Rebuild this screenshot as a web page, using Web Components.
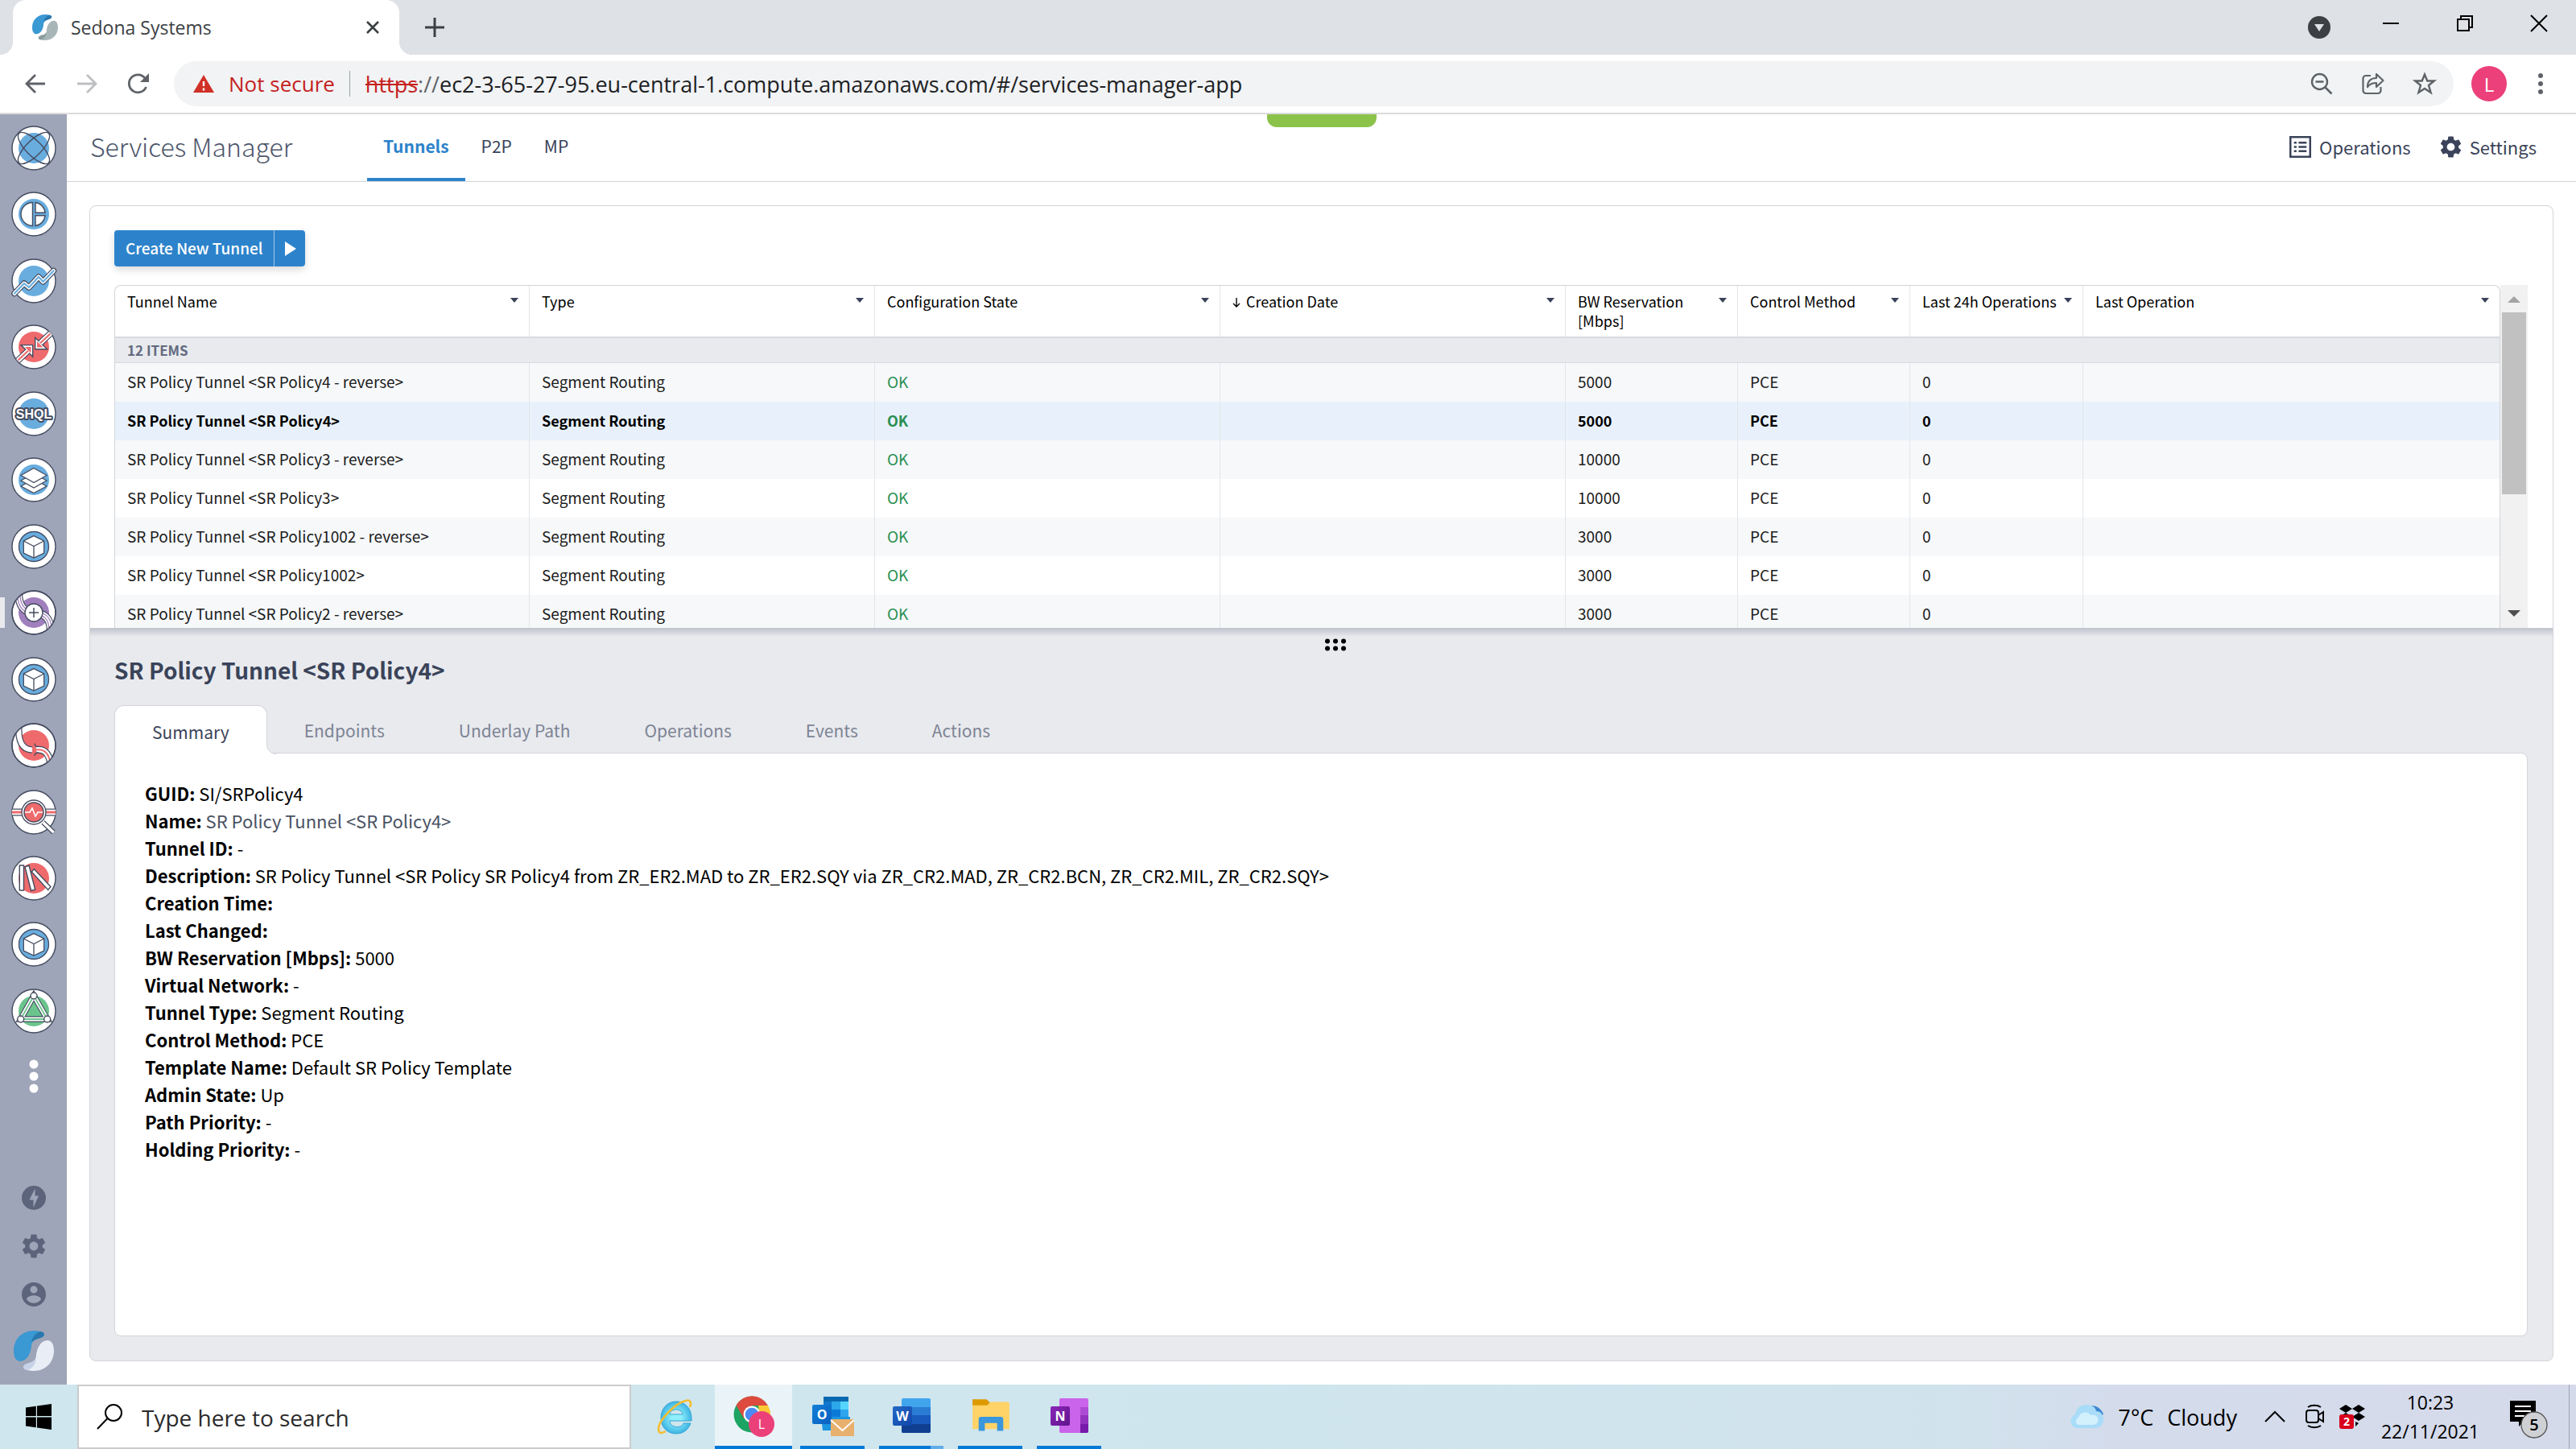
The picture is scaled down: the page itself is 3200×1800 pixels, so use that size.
<!DOCTYPE html>
<html lang="en">
<head>
<meta charset="utf-8">
<title>Sedona Systems</title>
<style>
  body {
    --app-font: "Noto Sans CJK SC", "Noto Sans", sans-serif;
    --os-font: "Open Sans", "Noto Sans", sans-serif;
    --ink: #3a4359;
    --blue: #2d83cb;
    --line: #d3d5da;
    --pane: #e8eaee;
    margin: 0;
    height: 100vh;
    display: flex;
    flex-direction: column;
    overflow: hidden;
    background: #fff;
    color: #000;
    font-family: var(--app-font);
  }
  .workspace { flex: 1; display: flex; min-height: 0; }
  main { flex: 1; display: flex; flex-direction: column; min-width: 0; }
</style>
</head>
<body>
  <browser-chrome tab-title="Sedona Systems"></browser-chrome>

  <div class="workspace">
    <side-nav></side-nav>
    <main>
      <app-header heading="Services Manager">
        <header-tab active>Tunnels</header-tab>
        <header-tab>P2P</header-tab>
        <header-tab>MP</header-tab>
        <header-action slot="actions" icon="list">Operations</header-action>
        <header-action slot="actions" icon="gear">Settings</header-action>
      </app-header>
      <split-view>
        <tunnel-grid slot="top"></tunnel-grid>
        <detail-panel slot="bottom" heading="SR Policy Tunnel &lt;SR Policy4&gt;">
          <detail-row label="GUID">SI/SRPolicy4</detail-row>
          <detail-row label="Name" muted>SR Policy Tunnel &lt;SR Policy4&gt;</detail-row>
          <detail-row label="Tunnel ID">-</detail-row>
          <detail-row label="Description">SR Policy Tunnel &lt;SR Policy SR Policy4 from ZR_ER2.MAD to ZR_ER2.SQY via ZR_CR2.MAD, ZR_CR2.BCN, ZR_CR2.MIL, ZR_CR2.SQY&gt;</detail-row>
          <detail-row label="Creation Time"></detail-row>
          <detail-row label="Last Changed"></detail-row>
          <detail-row label="BW Reservation [Mbps]">5000</detail-row>
          <detail-row label="Virtual Network">-</detail-row>
          <detail-row label="Tunnel Type">Segment Routing</detail-row>
          <detail-row label="Control Method">PCE</detail-row>
          <detail-row label="Template Name">Default SR Policy Template</detail-row>
          <detail-row label="Admin State">Up</detail-row>
          <detail-row label="Path Priority">-</detail-row>
          <detail-row label="Holding Priority">-</detail-row>
        </detail-panel>
      </split-view>
    </main>
  </div>

  <task-bar></task-bar>

<script>
/**
 * ============================================================
 * Icon set
 * ------------------------------------------------------------
 * name -> [viewBox, markup]. Plain icons use currentColor.
 * ============================================================
 */
const GEAR = `<path fill="currentColor" d="M19.14 12.94c.04-.3.06-.61.06-.94 0-.32-.02-.64-.07-.94l2.03-1.58c.18-.14.23-.41.12-.61l-1.92-3.32c-.12-.22-.37-.29-.59-.22l-2.39.96c-.5-.38-1.03-.7-1.62-.94l-.36-2.54c-.04-.24-.24-.41-.48-.41h-3.84c-.24 0-.43.17-.47.41l-.36 2.54c-.59.24-1.13.57-1.62.94l-2.39-.96c-.22-.08-.47 0-.59.22L2.74 8.87c-.12.21-.08.47.12.61l2.03 1.58c-.05.3-.09.63-.09.94s.02.64.07.94l-2.03 1.58c-.18.14-.23.41-.12.61l1.92 3.32c.12.22.37.29.59.22l2.39-.96c.5.38 1.03.7 1.62.94l.36 2.54c.05.24.24.41.48.41h3.84c.24 0 .44-.17.47-.41l.36-2.54c.59-.24 1.13-.56 1.62-.94l2.39.96c.22.08.47 0 .59-.22l1.92-3.32c.12-.22.07-.47-.12-.61l-2.01-1.58zM12 15.6c-1.98 0-3.6-1.62-3.6-3.6s1.62-3.6 3.6-3.6 3.6 1.62 3.6 3.6-1.62 3.6-3.6 3.6z"/>`;

const DARK = "#454c60";

// White disc with a coloured core, shared by every app badge
const disc = (core, body) => `
  <circle cx="28" cy="28" r="27" fill="#fff" stroke="${DARK}" stroke-width="1.4"/>
  <circle cx="28" cy="28" r="19" fill="${core}"/>${body}`;

// Same path stroked several times, widest first
const tube = (d, widths, colors) => widths
  .map((w, i) => `<path d="${d}" fill="none" stroke="${colors[i]}" stroke-width="${w}"/>`)
  .join("");

const logo = (pale, paleDark) => {
  const lobe = "M25 0C10 0 0 11 0 25c0 8 3 13 8 13 8 0 13-9 14-18 0-6 3-8 8-10 5-1 8-3 8-6-2-3-8-4-13-4z";
  const fold = "M33 1c-6 2-10 7-11 14 2-3 5-4 8-5 5-1 8-3 8-6-1-2-3-3-5-3z";
  return `
    <path fill="#3a98d3" d="${lobe}"/><path fill="#2a78ae" d="${fold}"/>
    <g transform="rotate(180 25 25)"><path fill="${pale}" d="${lobe}"/><path fill="${paleDark}" d="${fold}"/></g>`;
};

const CUBE = disc("#69addf", `
  <circle cx="28" cy="28" r="18.5" fill="none" stroke="${DARK}" stroke-width="1.3"/>
  <path d="M28 14.6L40.7 21v15L28 42 15.3 36V21z" fill="#fff" stroke="${DARK}" stroke-width="1.3"/>
  <path d="M15.3 21L28 27.5 40.7 21M28 27.5V42" fill="none" stroke="${DARK}" stroke-width="1.3"/>`);

const officeTile = (letter, from, to) => `
  <defs><linearGradient id="t" x1="0" y1="0" x2="1" y2="1"><stop offset="0" stop-color="${from}"/><stop offset="1" stop-color="${to}"/></linearGradient></defs>
  <rect x="0" y="11" width="24" height="24" rx="2" fill="url(#t)"/>
  <text x="12" y="29" text-anchor="middle" font-family="Open Sans, sans-serif" font-weight="700" font-size="16" fill="#fff">${letter}</text>`;

const ICONS = {
  network: ["0 0 56 56", disc("#69addf", `
    <g fill="none" stroke="${DARK}" stroke-width="1.4">
      <ellipse cx="28" cy="28" rx="26" ry="9.5" transform="rotate(45 28 28)"/>
      <ellipse cx="28" cy="28" rx="26" ry="9.5" transform="rotate(-45 28 28)"/>
    </g>`)],
  pie: ["0 0 56 56", disc("#69addf", `
    <g fill="#fff" stroke="${DARK}" stroke-width="1.4">
      <path d="M26.5 13.5V42.5A14.5 14.5 0 0 1 26.5 13.5z"/>
      <path d="M30 13.5V26.3H42A14 14 0 0 0 30 13.5z"/>
      <path d="M30 42.5V29.8H42A14 14 0 0 1 30 42.5z"/>
    </g>`)],
  trend: ["0 0 56 56", disc("#69addf", `<g stroke-linecap="round" stroke-linejoin="round">${
    tube("M4 43.5L16 31l6 5 12-13 5.5 6L52.5 15.5", [7.5, 5, 2.2], [DARK, "#fff", "#69addf"])}</g>`)],
  arrows: ["0 0 56 56", disc("#ef6a6c", `
    ${tube("M8 45L23 31M49 11L34 25", [8, 5.6], [DARK, "#fff"])}
    <path d="M12 25.6H26.7V40L22 35.5 16.5 30zM29.7 16.5V30.8H44.7L39.5 26 34 20.5z" fill="#fff" stroke="${DARK}" stroke-width="1.4"/>
    ${tube("M8.5 44.5L21 32.8M48.5 11.5L36 23.2", [5.6, 2.2], ["#fff", "#ef6a6c"])}
    <path d="M17 28h7.500v7.500zM32 21v7.500h7.500z" fill="#ef6a6c"/>`)],
  shql: ["0 0 56 56", disc("#69addf", `
    <text x="28" y="34" text-anchor="middle" font-family="Liberation Sans, sans-serif" font-weight="700" font-size="16"
      fill="#fff" stroke="${DARK}" stroke-width="4" stroke-linejoin="round" paint-order="stroke">SHQL</text>`)],
  layers: ["0 0 56 56", disc("#69addf", `
    <g fill="#fff" stroke="${DARK}" stroke-width="1.3">
      <path d="M28 27l16 9-16 8.5L12 36z"/><path d="M28 20l16 9-16 9-16-9z"/><path d="M28 13.5l16 9-16 9-16-9z"/>
    </g>`)],
  cube: ["0 0 56 56", CUBE],
  tunnel: ["0 0 56 56", `<clipPath id="c"><circle cx="28" cy="28" r="27"/></clipPath>` + disc("#a07fbd", `
    <g clip-path="url(#c)">${tube("M9 2C9 14 12 24 22 27M34 29C44 31 49 37 49 54", [10, 7.6, 4.6, 2], [DARK, "#fff", "#a07fbd", "#fff"])}</g>
    <circle cx="28" cy="28" r="27" fill="none" stroke="${DARK}" stroke-width="1.4"/>
    <circle cx="28" cy="28" r="11" fill="#fff" stroke="${DARK}" stroke-width="1.4"/>
    <path d="M28 22v12M22 28h12" stroke="${DARK}" stroke-width="1.5"/>`)],
  broken: ["0 0 56 56", `<clipPath id="c"><circle cx="28" cy="28" r="27"/></clipPath>` + disc("#ef6a6c", `
    <g clip-path="url(#c)">
      ${tube("M9.500 2C8 24 14 33 26 33.5", [8.5, 6], [DARK, "#fff"])}
      ${tube("M31 33.5C42 32 48 39 49 54", [9, 6.6, 2], [DARK, "#fff", "#ef6a6c"])}
      <path d="M29 25.5c0 3 2 4 5 4M29 41c0-3 2-4 5-4" fill="none" stroke="${DARK}" stroke-width="1.3"/>
    </g>
    <circle cx="28" cy="28" r="27" fill="none" stroke="${DARK}" stroke-width="1.4"/>`)],
  inspect: ["0 0 56 56", `
    <circle cx="28" cy="28" r="27" fill="#fff" stroke="${DARK}" stroke-width="1.4"/>
    ${tube("M1 28H55", [9, 6.5, 3], [DARK, "#fff", "#ef6a6c"])}
    ${tube("M39.5 40.5L52.5 53", [6, 3.5], [DARK, "#fff"])}
    <circle cx="28" cy="28" r="15" fill="#fff" stroke="${DARK}" stroke-width="1.4"/>
    <circle cx="28" cy="28" r="12" fill="#ef6a6c" stroke="${DARK}" stroke-width="1.4"/>
    <path d="M17 28h6l3-5 4 10 3-5h6" fill="none" stroke="#fff" stroke-width="1.6"/>`],
  books: ["0 0 56 56", disc("#ef6a6c", `
    <g fill="#fff" stroke="${DARK}" stroke-width="1.4">
      <path d="M10.3 12h5.2v31h-5.2zM17 14l5-2 7.7 30-5 1.5zM25.3 20l3-3.5L49 38.5l-3.3 4z"/>
    </g>`)],
  triangle: ["0 0 56 56", disc("#6cc48d", `
    ${tube("M28 9L11.7 38H44.7z", [7.5, 5.2, 1.8], [DARK, "#fff", "#6cc48d"])}
    <g fill="#fff" stroke="${DARK}" stroke-width="1.4"><circle cx="28" cy="9" r="4"/><circle cx="11.7" cy="38" r="4"/><circle cx="44.7" cy="38" r="4"/></g>`)],
  more: ["0 0 12 42", `<g fill="#fff"><circle cx="6" cy="6" r="5.5"/><circle cx="6" cy="21" r="5.5"/><circle cx="6" cy="36" r="5.5"/></g>`],
  bolt: ["0 0 30 30", `<circle cx="15" cy="15" r="15" fill="currentColor"/><path d="M16.5 3.5v9H21L14.5 27v-9.500H9.500z" fill="#9ea5b8"/>`],
  gear: ["2 2 20 20", GEAR],
  user: ["2 2 20 20", `<path fill="currentColor" d="M12 2C6.48 2 2 6.48 2 12s4.48 10 10 10 10-4.48 10-10S17.52 2 12 2zm0 3c1.66 0 3 1.34 3 3s-1.34 3-3 3-3-1.34-3-3 1.34-3 3-3zm0 14.2c-2.5 0-4.71-1.28-6-3.22.03-1.99 4-3.08 6-3.08 1.99 0 5.97 1.09 6 3.08-1.29 1.94-3.5 3.22-6 3.22z"/>`],
  logo: ["0 0 50 50", logo("#e9edf6", "#c6d2e8")],
  favicon: ["0 0 50 50", logo("#a9b6b8", "#8b9b9e")],
  list: ["0 0 26 26", `<rect x="1.2" y="1.2" width="23.6" height="23.6" fill="none" stroke="currentColor" stroke-width="2.4"/>
    <path d="M5.5 8h3M11 8h9.500M5.500 13h3M11 13h9.500M5.500 18h3M11 18h9.500" stroke="currentColor" stroke-width="2.4"/>`],
  // browser
  back: ["0 0 28 28", `<path d="M26 14H3M14 3L3 14l11 11" fill="none" stroke="currentColor" stroke-width="2.8"/>`],
  forward: ["0 0 28 28", `<path d="M2 14h23M14 3l11 11-11 11" fill="none" stroke="currentColor" stroke-width="2.8"/>`],
  reload: ["0 0 28 28", `<path d="M23.5 18A11 11 0 1 1 22 7" fill="none" stroke="currentColor" stroke-width="2.8"/><path d="M27 1v11H16z" fill="currentColor"/>`],
  warn: ["0 0 26 22" , `<path d="M13 0l13 22H0z" fill="#d03027"/><path d="M13 8v6M13 16.5v3" stroke="#fff" stroke-width="2.4"/>`],
  close: ["0 0 18 18", `<path d="M2 2l14 14M16 2L2 16" stroke="currentColor" stroke-width="2.6"/>`],
  plus: ["0 0 24 24", `<path d="M12 0v24M0 12h24" stroke="currentColor" stroke-width="3"/>`],
  dropdown: ["0 0 28 28", `<circle cx="14" cy="14" r="14" fill="#3c4043"/><path d="M8 10h12l-6 9z" fill="#dee1e6"/>`],
  minimize: ["0 0 20 20", `<path d="M0 10h20" stroke="#000" stroke-width="2"/>`],
  restore: ["0 0 20 20", `<path d="M1 5h14v14H1zM5 5V1h14v14h-4" fill="none" stroke="#000" stroke-width="2"/>`],
  winclose: ["0 0 20 20", `<path d="M0 0l20 20M20 0L0 20" stroke="#000" stroke-width="2"/>`],
  zoomout: ["0 0 28 28", `<circle cx="11.5" cy="11.5" r="9.5" fill="none" stroke="currentColor" stroke-width="2.4"/><path d="M6.5 11.5h10M18 18l8.5 8.5" stroke="currentColor" stroke-width="2.6"/>`],
  share: ["0 0 28 28", `<path d="M11 4H5a3.5 3.5 0 0 0-3.5 3.5v15A3.5 3.5 0 0 0 5 26h15a3.5 3.5 0 0 0 3.5-3.5V18" fill="none" stroke="currentColor" stroke-width="2.2"/><path d="M7 18c0-7 4-11 11-11V2l8.5 8L18 18v-5c-5 0-8 1-11 5z" fill="none" stroke="currentColor" stroke-width="2.2" stroke-linejoin="round"/>`],
  star: ["0 0 28 28", `<path d="M14 2.5l3.300 8h8.500L19 16l2.600 9L14 20l-7.600 5L9 16l-6.800-5.500h8.500z" fill="none" stroke="currentColor" stroke-width="2.4"/>`],
  kebab: ["0 0 6 26", `<g fill="currentColor"><circle cx="3" cy="3" r="3"/><circle cx="3" cy="13" r="3"/><circle cx="3" cy="23" r="3"/></g>`],
  // grid
  caret: ["0 0 10 6", `<path d="M0 0h10L5 6z" fill="currentColor"/>`],
  play: ["0 0 14 18", `<path d="M0 0l14 9-14 9z" fill="currentColor"/>`],
  sort: ["0 0 10 12", `<path d="M5 0v11M1 7l4 4 4-4" fill="none" stroke="currentColor" stroke-width="1.4"/>`],
  up: ["0 0 16 8", `<path d="M0 8l8-8 8 8z" fill="currentColor"/>`],
  down: ["0 0 16 8", `<path d="M0 0l8 8 8-8z" fill="currentColor"/>`],
  grip: ["0 0 26 16", `<g fill="#000"><circle cx="3" cy="3.5" r="3"/><circle cx="13" cy="3.5" r="3"/><circle cx="23" cy="3.5" r="3"/><circle cx="3" cy="12.5" r="3"/><circle cx="13" cy="12.5" r="3"/><circle cx="23" cy="12.5" r="3"/></g>`],
  // taskbar
  windows: ["0 0 32 32", `<path d="M0 4.5l12.800-1.800V15H0zM14 2.500L32 0v15H14zM0 16.500h12.800v12.700L0 27.500zM14 16.500h18V32l-18-2.600z"/>`],
  search: ["0 0 32 32", `<circle cx="21" cy="11" r="10" fill="none" stroke="#000" stroke-width="2"/><path d="M13.5 18L1 31" stroke="#000" stroke-width="2"/>`],
  ie: ["0 0 48 48", `
    <defs><radialGradient id="g"><stop offset="0.3" stop-color="#8ff0fb"/><stop offset="1" stop-color="#3db5e4"/></radialGradient></defs>
    <path d="M44 29H17c0 9 15 10 17 3h9c-3 8-9 13-18 13C13 45 6 36 6 25S14 5 25 5s20 9 19 24zM17 21h16c-1-8-15-8-16 0z" fill="url(#g)" stroke="#39a5d2" stroke-width="1"/>
    <path d="M42 12c2-5 1-10-5-8C23 7 3 29 3 39c0 6 4 6 9 3" fill="none" stroke="#f6bd2e" stroke-width="2.6"/>`],
  chrome: ["0 0 52 52", `
    <circle cx="23" cy="23" r="22.5" fill="#1da462"/>
    <path d="M3.5 11.800A22.500 22.500 0 0 1 43 12H23L13 28z" fill="#dc4b3e"/>
    <path d="M43 12a22.500 22.500 0 0 1-20 33.500L33 28l-2-16z" fill="#fcc934"/>
    <circle cx="23" cy="23" r="10.5" fill="#fff"/><circle cx="23" cy="23" r="8.3" fill="#4c8bf5"/>
    <circle cx="35" cy="35" r="16" fill="#ec407a"/>
    <text x="35" y="41" text-anchor="middle" font-family="Open Sans, sans-serif" font-size="16" fill="#fff">L</text>`],
  outlook: ["0 0 52 52", `
    <rect x="14" y="1" width="31" height="7" fill="#0a68b0"/>
    <rect x="14" y="7" width="10" height="12" fill="#1078cd"/><rect x="24" y="7" width="11" height="10" fill="#2ba7ea"/><rect x="35" y="7" width="10" height="10" fill="#55d5fd"/>
    <rect x="24" y="17" width="11" height="10" fill="#0a7ad8"/><rect x="35" y="17" width="10" height="12" fill="#2ea5ee"/>
    <path d="M11 26h36v17H13z" fill="#1a95e0"/>
    ${officeTile("O", "#1280d8", "#0a5fc0")}
    <rect x="23" y="29" width="29" height="21" fill="#e8b06e"/><path d="M23 30l14.5 13L52 30" fill="none" stroke="#fff" stroke-width="1.8"/>`],
  word: ["0 0 48 48", `
    <rect x="11" y="1" width="36" height="43" rx="2" fill="#41a5ee"/><path d="M11 12h36v10H11z" fill="#2b7cd3"/><path d="M11 22h36v11H11z" fill="#185abd"/><path d="M11 33h36v9a2 2 0 0 1-2 2H13a2 2 0 0 1-2-2z" fill="#103f91"/>
    ${officeTile("W", "#2368c4", "#1146ac")}`],
  explorer: ["0 0 44 44", `
    <path d="M1 2h16l4 4-4 4H1z" fill="#dd9a00"/><path d="M1 9h17l4-4h19a2 2 0 0 1 2 2v29H1z" fill="#ffd367"/>
    <path d="M8 38V25a3 3 0 0 1 3-3h22a3 3 0 0 1 3 3v13h-7V29H15v9z" fill="#3a96dd"/>`],
  onenote: ["0 0 48 48", `
    <rect x="11" y="1" width="36" height="43" rx="2" fill="#ca64ea"/><path d="M37 12h10v10H37z" fill="#ae4bd5"/><path d="M37 22h10v11H37z" fill="#9332bf"/><path d="M37 33h10v9a2 2 0 0 1-2 2h-8z" fill="#7719aa"/>
    ${officeTile("N", "#8a27b8", "#5f148c")}`],
  cloud: ["0 0 44 30", `
    <path d="M26 1c9-1 15 5 17 11l-7 4z" fill="#3b86d0"/>
    <path d="M9 29a9 9 0 0 1-1-17C9 4 15 0 22 0c7 0 11 3 12 8 6 0 9 5 9 10s-3 11-10 11z" fill="#a9dcf8"/>
    <path d="M13 25c-5 0-6-7-1-9 1-7 12-9 15-3 7-2 11 4 9 8-1 3-4 4-7 4z" fill="#d3f0fd"/>`],
  chevron: ["0 0 26 14", `<path d="M1 13L13 1l12 12" fill="none" stroke="#000" stroke-width="2"/>`],
  camera: ["0 0 24 32", `<rect x="1" y="8" width="15" height="15" rx="3" fill="none" stroke="#000" stroke-width="2"/><path d="M16 14l6-4v12l-6-4M3 4c4-3 12-3 16 0M3 27c4 3 12 3 16 0" fill="none" stroke="#000" stroke-width="2"/>`],
  dropbox: ["0 0 32 32", `<path d="M8 1l8 5-8 5-8-5zM24 1l8 5-8 5-8-5zM8 11l8 5-8 5-8-5zM24 11l8 5-8 5-8-5zM20 22l4 2-4 4z"/>
    <rect x="0" y="13" width="18" height="18" rx="3" fill="#d9001b"/>
    <text x="9" y="27" text-anchor="middle" font-family="Open Sans, sans-serif" font-weight="700" font-size="14" fill="#fff">2</text>`],
  notify: ["0 0 48 48", `<path d="M0 0h32v26H17l-6 6v-6H0z"/><path d="M6 7h20M6 13h20M6 19h12" stroke="#fff" stroke-width="2"/>
    <circle cx="30" cy="30" r="16" fill="#cfd0d4" stroke="#555" stroke-width="1.3"/>
    <text x="30" y="37" text-anchor="middle" font-family="Open Sans, sans-serif" font-weight="600" font-size="20">5</text>`]
};

// Attach an open shadow root with the given markup
const render = (el, html) => {
  el.attachShadow({ mode: "open" }).innerHTML = html;
};

/* <ui-icon name="..."> - sized by its parent */
class UiIcon extends HTMLElement {
  connectedCallback() {
    if (this.shadowRoot) return;
    const [box, body] = ICONS[this.getAttribute("name")];
    render(this, `
      <style>
        :host { display: block; flex: none; }
        svg { display: block; width: 100%; height: 100%; overflow: visible; }
      </style>
      <svg viewBox="${box}" aria-hidden="true">${body}</svg>`);
  }
}

/**
 * ============================================================
 * <browser-chrome> - tab strip and address bar
 * ============================================================
 */
class BrowserChrome extends HTMLElement {
  constructor() {
    super();
    render(this, `
      <style>
        :host { display: block; font-family: var(--os-font); border-bottom: 2px solid #dcdcdc; color: #5f6368; }
        button { border: 0; padding: 0; background: none; color: inherit; font: inherit; }
        .strip { display: flex; align-items: center; height: 68px; background: #dee1e6; padding-left: 16px; box-sizing: border-box; color: #3c4043; }
        .tab { position: relative; display: flex; align-items: center; gap: 16px; width: 480px; height: 68px; box-sizing: border-box; padding: 0 24px; background: #fff; border-radius: 16px 16px 0 0; font-size: 23px; }
        .tab::before, .tab::after { content: ""; position: absolute; bottom: 0; width: 16px; height: 16px; }
        .tab::before { right: 100%; background: radial-gradient(circle at 0 0, transparent 16px, #fff 16px); }
        .tab::after { left: 100%; background: radial-gradient(circle at 100% 0, transparent 16px, #fff 16px); }
        .tab span { flex: 1; }
        .s18 { width: 18px; height: 18px; }
        .s20 { width: 20px; height: 20px; }
        .s24 { width: 24px; height: 24px; }
        .s28 { width: 28px; height: 28px; }
        .s32 { width: 32px; height: 32px; }
        .new { margin-left: 32px; }
        .tabsearch { margin-left: auto; margin-right: 65px; }
        .window { display: flex; gap: 72px; padding: 0 36px 10px 0; }
        .bar { display: flex; align-items: center; height: 72px; box-sizing: border-box; padding: 0 41px 0 30px; }
        .nav { display: flex; gap: 36px; width: 186px; }
        .nav .off { color: #bdbfc2; }
        .omni { flex: 1; display: flex; align-items: center; height: 56px; box-sizing: border-box; border-radius: 28px; background: #f1f3f4; padding: 0 22px 0 24px; font-size: 26px; }
        .warn { width: 26px; height: 22px; margin-right: 18px; }
        .insecure { color: #c5221f; border-right: 1px solid #9aa0a6; line-height: 32px; padding-right: 18px; margin-right: 19px; }
        .url { flex: 1; outline: 0; white-space: nowrap; font-size: 27px; }
        .url s { color: #c5221f; }
        .url b { font-weight: 400; color: #202124; }
        .tools { display: flex; gap: 36px; }
        .avatar { width: 44px; height: 44px; border-radius: 50%; background: #ec407a; color: #fff; font-size: 24px; margin: 0 39px 0 22px; }
        .kebab { width: 6px; height: 26px; }
      </style>
      <div class="strip">
        <div class="tab">
          <ui-icon class="s32" name="favicon"></ui-icon>
          <span>${this.getAttribute("tab-title")}</span>
          <button aria-label="Close tab"><ui-icon class="s18" name="close"></ui-icon></button>
        </div>
        <button class="new" aria-label="New tab"><ui-icon class="s24" name="plus"></ui-icon></button>
        <button class="tabsearch" aria-label="Search tabs"><ui-icon class="s28" name="dropdown"></ui-icon></button>
        <div class="window">
          <button aria-label="Minimise"><ui-icon class="s20" name="minimize"></ui-icon></button>
          <button aria-label="Restore"><ui-icon class="s20" name="restore"></ui-icon></button>
          <button aria-label="Close"><ui-icon class="s20" name="winclose"></ui-icon></button>
        </div>
      </div>
      <div class="bar">
        <div class="nav">
          <button aria-label="Back"><ui-icon class="s28" name="back"></ui-icon></button>
          <button class="off" aria-label="Forward"><ui-icon class="s28" name="forward"></ui-icon></button>
          <button aria-label="Reload"><ui-icon class="s28" name="reload"></ui-icon></button>
        </div>
        <div class="omni">
          <ui-icon class="warn" name="warn"></ui-icon>
          <span class="insecure">Not secure</span>
          <div class="url" role="textbox" contenteditable="true" spellcheck="false" aria-label="Address"><s>https</s>://<b>ec2-3-65-27-95.eu-central-1.compute.amazonaws.com/#/services-manager-app</b></div>
          <div class="tools">
            <button aria-label="Zoom"><ui-icon class="s28" name="zoomout"></ui-icon></button>
            <button aria-label="Share"><ui-icon class="s28" name="share"></ui-icon></button>
            <button aria-label="Bookmark"><ui-icon class="s28" name="star"></ui-icon></button>
          </div>
        </div>
        <button class="avatar">L</button>
        <button aria-label="Menu"><ui-icon class="kebab" name="kebab"></ui-icon></button>
      </div>`);
  }
}

/**
 * ============================================================
 * <side-nav> - application switcher
 * ============================================================
 */
class SideNav extends HTMLElement {
  static #APPS = ["network", "pie", "trend", "arrows", "shql", "layers", "cube",
    "tunnel", "cube", "broken", "inspect", "books", "cube", "triangle"];

  constructor() {
    super();
    const apps = SideNav.#APPS.map(name => `
      <button class="app${name === "tunnel" ? " active" : ""}" aria-label="${name}"><ui-icon name="${name}"></ui-icon></button>`).join("");
    render(this, `
      <style>
        :host { display: flex; flex-direction: column; align-items: center; width: 83px; box-sizing: border-box; padding: 14px 0 17px; background: #9fa5b8; color: #5c647c; }
        nav { flex: 1; width: 100%; display: flex; flex-direction: column; align-items: center; justify-content: space-between; }
        button { border: 0; padding: 0; background: none; color: inherit; }
        .app { width: 100%; display: flex; justify-content: center; align-items: center; height: 56px; }
        .app ui-icon { width: 56px; height: 56px; }
        .active { background: linear-gradient(#e8eaee, #e8eaee) left / 6px 38px no-repeat; }
        .more { margin-top: 32px; }
        .more ui-icon { width: 12px; height: 42px; }
        .tools { display: flex; flex-direction: column; align-items: center; gap: 30px; padding-top: 115px; }
        .tools ui-icon { width: 30px; height: 30px; }
        .tools .logo { width: 50px; height: 50px; }
      </style>
      <nav>${apps}</nav>
      <button class="more" aria-label="More"><ui-icon name="more"></ui-icon></button>
      <div class="tools">
        <button aria-label="Activity"><ui-icon name="bolt"></ui-icon></button>
        <button aria-label="Settings"><ui-icon name="gear"></ui-icon></button>
        <button aria-label="Account"><ui-icon name="user"></ui-icon></button>
        <ui-icon class="logo" name="logo"></ui-icon>
      </div>`);
  }
}

class AppHeader extends HTMLElement {
  constructor() {
    super();
    render(this, `
      <style>
        :host { position: relative; display: flex; height: 84px; box-sizing: border-box; border-bottom: 1px solid var(--line); padding: 0 49px 0 29px; color: var(--ink); }
        h1 { margin: 0; width: 344px; line-height: 78px; font-size: 32px; font-weight: 300; color: #4d566b; }
        nav { display: flex; }
        .actions { margin-left: auto; display: flex; gap: 36px; }
        .status { position: absolute; top: 0; left: calc(50% - 68px); width: 136px; height: 16px; border-radius: 0 0 12px 12px; background: #8bc34a; }
      </style>
      <h1>${this.getAttribute("heading")}</h1>
      <nav><slot></slot></nav>
      <div class="actions"><slot name="actions"></slot></div>
      <div class="status"></div>`);
  }
}

class HeaderTab extends HTMLElement {
  constructor() {
    super();
    render(this, `
      <style>
        :host { display: flex; }
        a { display: block; padding: 0 20px; line-height: 79px; font-size: 21px; font-weight: 400; color: inherit; text-decoration: none; border-bottom: 4px solid transparent; }
        :host([active]) a { color: var(--blue); font-weight: 700; border-color: var(--blue); }
      </style>
      <a href="#"><slot></slot></a>`);
  }
}

class HeaderAction extends HTMLElement {
  constructor() {
    super();
    render(this, `
      <style>
        :host { display: flex; }
        button { display: flex; align-items: center; gap: 10px; height: 80px; border: 0; padding: 0; background: none; font: inherit; font-size: 22px; color: inherit; }
        ui-icon { width: 27px; height: 27px; }
      </style>
      <button><ui-icon name="${this.getAttribute("icon")}"></ui-icon><slot></slot></button>`);
  }
}

/* Two stacked panes with a drag handle between them */
class SplitView extends HTMLElement {
  constructor() {
    super();
    render(this, `
      <style>
        :host { flex: 1; display: flex; flex-direction: column; min-height: 0; margin: 29px 28px; border: 1px solid var(--line); border-radius: 8px; background: var(--pane); }
        .top { flex: none; height: 524px; overflow: hidden; background: #fff; border-radius: 8px 8px 0 0; }
        .handle { display: flex; justify-content: center; height: 44px; box-sizing: border-box; padding: 12px 0 0 34px; cursor: row-resize;
          border-top: 1px solid #c4c7ce; background: linear-gradient(#c3c6cf, var(--pane) 10px); }
        .handle ui-icon { width: 26px; height: 16px; }
        .bottom { flex: 1; display: flex; min-height: 0; }
      </style>
      <div class="top"><slot name="top"></slot></div>
      <div class="handle"><ui-icon name="grip"></ui-icon></div>
      <div class="bottom"><slot name="bottom"></slot></div>`);
  }
}

/**
 * ============================================================
 * <tunnel-grid> - toolbar and table of tunnels
 * ============================================================
 */
class TunnelGrid extends HTMLElement {
  // [title, width]
  static #COLUMNS = [
    ["Tunnel Name", 514], ["Type", 429], ["Configuration State", 429], ["Creation Date", 429],
    ["BW Reservation [Mbps]", 214], ["Control Method", 214], ["Last 24h Operations", 215], ["Last Operation", 0]
  ];

  // [policy, bandwidth]
  static #ROWS = [
    ["SR Policy4 - reverse", 5000], ["SR Policy4", 5000], ["SR Policy3 - reverse", 10000], ["SR Policy3", 10000],
    ["SR Policy1002 - reverse", 3000], ["SR Policy1002", 3000], ["SR Policy2 - reverse", 3000]
  ];

  constructor() {
    super();
    const cols = TunnelGrid.#COLUMNS.map(([, w]) => w ? `<col style="width:${w}px">` : "<col>").join("");
    const heads = TunnelGrid.#COLUMNS.map(([title]) => `
      <th><div>${title === "Creation Date" ? '<ui-icon class="sort" name="sort"></ui-icon>' : ""}<span>${title}</span><ui-icon class="caret" name="caret"></ui-icon></div></th>`).join("");
    const rows = TunnelGrid.#ROWS.map(([policy, bw], i) => `
      <tr${i === 1 ? ' class="selected"' : ""}><td>SR Policy Tunnel &lt;${policy}&gt;</td><td>Segment Routing</td><td class="ok">OK</td><td></td><td>${bw}</td><td>PCE</td><td>0</td><td></td></tr>`).join("");
    render(this, `
      <style>
        :host { display: block; padding: 30px 31px 0 30px; }
        .split { display: inline-flex; height: 45px; border-radius: 4px; box-shadow: 0 4px 10px rgba(0, 0, 0, .15); }
        .split button { border: 0; background: var(--blue); color: #fff; font: inherit; font-size: 19px; font-weight: 500; padding: 0 14px 2px; border-radius: 4px 0 0 4px; }
        .split .arrow { width: 39px; padding: 0 0 0 13px; border-left: 1px solid #9cc6ea; border-radius: 0 4px 4px 0; }
        .split ui-icon { width: 14px; height: 18px; }
        .frame { display: flex; height: 426px; margin-top: 23px; overflow: hidden; }
        table { flex: 1; width: 0; table-layout: fixed; border-collapse: separate; border-spacing: 0; border: 1px solid var(--line); border-bottom: 0; border-radius: 8px 8px 0 0; font-size: 19px; }
        th, td { padding: 0 15px; text-align: left; vertical-align: top; font-weight: 400; border-left: 1px solid #e3e5e9; }
        th:first-child, td:first-child { border-left: 0; }
        th { height: 63px; padding: 7px 13px 0 15px; box-sizing: border-box; line-height: 24px; font-size: 18px; }
        th div { display: flex; }
        th span { flex: 1; }
        .caret { width: 10px; height: 6px; margin-top: 8px; color: var(--ink); }
        .sort { width: 10px; height: 12px; margin: 8px 7px 0 0; }
        .count td { height: 33px; box-sizing: border-box; line-height: 30px; font-size: 17px; font-weight: 700; color: #646b80; background: var(--pane); border-top: 2px solid #d8dae1; border-bottom: 1px solid #d8dae1; }
        tbody td { height: 48px; line-height: 46px; white-space: nowrap; color: #1c1c1c; }
        tbody tr:nth-child(odd) { background: #f6f8fa; }
        tbody tr.selected { background: #e8f1fb; }
        .selected td { font-size: 18px; font-weight: 700; color: #000; }
        td.ok, .selected td.ok { color: #2a8f52; }
        .scroll { display: flex; flex-direction: column; align-items: center; width: 34px; box-sizing: border-box; padding: 14px 0; background: #f1f1f1; color: #505050; }
        .scroll ui-icon { width: 16px; height: 8px; }
        .scroll .up { color: #a3a3a3; }
        .thumb { width: 30px; height: 226px; margin: 12px 0 auto; background: #c1c1c1; }
      </style>
      <div class="split">
        <button>Create New Tunnel</button><button class="arrow" aria-label="More create options"><ui-icon name="play"></ui-icon></button>
      </div>
      <div class="frame">
        <table>
          <colgroup>${cols}</colgroup>
          <thead><tr>${heads}</tr><tr class="count"><td colspan="8">12 ITEMS</td></tr></thead>
          <tbody>${rows}</tbody>
        </table>
        <div class="scroll"><ui-icon class="up" name="up"></ui-icon><div class="thumb"></div><ui-icon name="down"></ui-icon></div>
      </div>`);
  }
}

/**
 * ============================================================
 * <detail-panel> - selected tunnel, with tabs
 * ============================================================
 */
class DetailPanel extends HTMLElement {
  static #TABS = ["Summary", "Endpoints", "Underlay Path", "Operations", "Events", "Actions"];

  constructor() {
    super();
    const tabs = DetailPanel.#TABS.map((t, i) => `<button role="tab" aria-selected="${i === 0}">${t}</button>`).join("");
    const heading = this.getAttribute("heading").replace(/</g, "&lt;");
    render(this, `
      <style>
        :host { flex: 1; display: flex; flex-direction: column; padding: 0 31px 30px 30px; }
        h2 { margin: 0; height: 52px; line-height: 16px; font-size: 28px; font-weight: 700; color: var(--ink); }
        .tabs { display: flex; height: 60px; position: relative; margin-bottom: -1px; }
        button { height: 61px; border: 0; padding: 0 46px; background: none; font: inherit; font-size: 21px; line-height: 52px; color: #7e8494; }
        [aria-selected=true] { position: relative; padding: 4px 46px 0; background: #fff; color: var(--ink); border: 1px solid var(--line); border-bottom: 0; border-radius: 12px 12px 0 0; }
        [aria-selected=true]::after { content: ""; position: absolute; left: 100%; bottom: 0; width: 12px; height: 12px;
          background: radial-gradient(circle at 100% 0, transparent 11px, var(--line) 11px, var(--line) 12px, #fff 12px); }
        .body { flex: 1; box-sizing: border-box; border: 1px solid var(--line); border-radius: 0 8px 8px 8px; background: #fff; padding: 32px 37px; }
      </style>
      <h2>${heading}</h2>
      <div class="tabs" role="tablist">${tabs}</div>
      <div class="body" role="tabpanel"><slot></slot></div>`);
  }
}

class DetailRow extends HTMLElement {
  constructor() {
    super();
    render(this, `
      <style>
        :host { display: block; font-size: 22px; line-height: 34px; }
        :host([muted]) span { color: #4a5263; }
      </style>
      <b>${this.getAttribute("label")}:</b> <span><slot></slot></span>`);
  }
}

/**
 * ============================================================
 * <task-bar>
 * ============================================================
 */
class TaskBar extends HTMLElement {
  static #APPS = [["ie", ""], ["chrome", "open current"], ["outlook", "open"], ["word", "open many"], ["explorer", "open"], ["onenote", "open"]];

  constructor() {
    super();
    const apps = TaskBar.#APPS.map(([name, state]) => `
      <button class="app ${state}" aria-label="${name}"><ui-icon class="${name}" name="${name}"></ui-icon></button>`).join("");
    render(this, `
      <style>
        :host { display: flex; align-items: stretch; height: 80px; font-family: var(--os-font); background: linear-gradient(90deg, #cfe6ee 0 42%, #d0e3ec 75%, #d4dcec 82%, #d5daea); }
        button { border: 0; padding: 0; background: none; font: inherit; color: inherit; }
        .start { width: 96px; display: grid; place-items: center; }
        .s32 { width: 32px; height: 32px; }
        .search { display: flex; align-items: center; gap: 24px; width: 688px; box-sizing: border-box; border: 2px solid #ccc; background: #fff; padding: 0 22px; margin-right: 6px; }
        input { flex: 1; border: 0; padding: 2px 0 0; background: none; font: inherit; font-size: 28px; outline: 0; }
        input::placeholder { color: #2b2b2b; opacity: 1; }
        .apps { display: flex; gap: 2px; }
        .app { position: relative; display: grid; place-items: center; width: 96px; padding-left: 2px; }
        .app ui-icon { width: 48px; height: 48px; }
        .app .chrome, .app .outlook { width: 52px; height: 52px; }
        .open::after { content: ""; position: absolute; left: 8px; right: 8px; bottom: 0; height: 4px; background: #0078d7; }
        .current { background: #eaf4f8; }
        .current::after { left: 0; right: 0; }
        .many::after { background: linear-gradient(90deg, #0078d7 64px, #62ace8 64px); }
        .tray { margin-left: auto; display: flex; align-items: center; font-size: 27px; }
        .weather { display: flex; align-items: center; gap: 17px; margin-right: 34px; }
        .cloud { width: 44px; height: 30px; }
        .chevron { width: 26px; height: 14px; margin-right: 25px; }
        .camera { width: 24px; height: 32px; margin-right: 18px; }
        .clock { margin: 0 38px 0 20px; font-size: 23px; line-height: 36px; text-align: center; }
        .notify { width: 48px; height: 48px; margin-right: 25px; margin-top: 8px; }
        .edge { align-self: stretch; width: 8px; border-left: 1px solid #9aa3b5; }
      </style>
      <button class="start" aria-label="Start"><ui-icon class="s32" name="windows"></ui-icon></button>
      <label class="search"><ui-icon class="s32" name="search"></ui-icon><input type="text" placeholder="Type here to search" aria-label="Type here to search"></label>
      <div class="apps">${apps}</div>
      <div class="tray">
        <button class="weather"><ui-icon class="cloud" name="cloud"></ui-icon><span>7°C</span><span>Cloudy</span></button>
        <button aria-label="Show hidden icons"><ui-icon class="chevron" name="chevron"></ui-icon></button>
        <ui-icon class="camera" name="camera"></ui-icon>
        <ui-icon class="s32" name="dropbox"></ui-icon>
        <div class="clock">10:23<br>22/11/2021</div>
        <ui-icon class="notify" name="notify"></ui-icon>
        <div class="edge"></div>
      </div>`);
  }
}

customElements.define("ui-icon", UiIcon);
customElements.define("browser-chrome", BrowserChrome);
customElements.define("side-nav", SideNav);
customElements.define("app-header", AppHeader);
customElements.define("header-tab", HeaderTab);
customElements.define("header-action", HeaderAction);
customElements.define("split-view", SplitView);
customElements.define("tunnel-grid", TunnelGrid);
customElements.define("detail-panel", DetailPanel);
customElements.define("detail-row", DetailRow);
customElements.define("task-bar", TaskBar);
</script>
</body>
</html>
